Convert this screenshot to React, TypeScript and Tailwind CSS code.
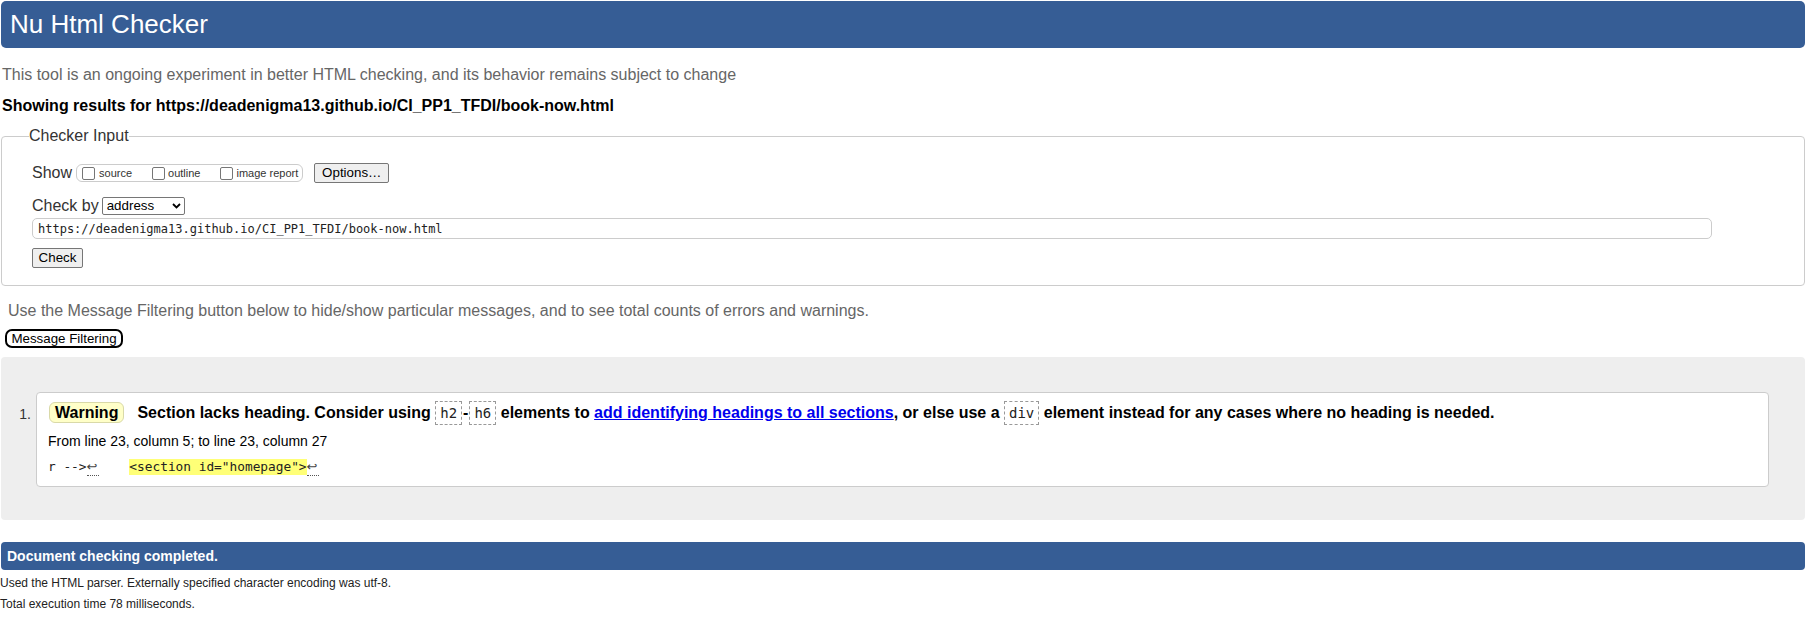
import React from "react";

const Checkbox = () => (
  <span className="inline-block w-[13px] h-[13px] border border-[#767676] rounded-[2px] bg-white shrink-0" />
);

const Code = ({ children }: { children: React.ReactNode }) => (
  <code className="inline-block border border-dashed border-[#999] px-[4px] leading-[22px] font-['DejaVu_Sans_Mono',monospace] text-[14px] font-normal text-[#222] bg-white">
    {children}
  </code>
);

const Ret = () => (
  <span className="inline-block w-[12px] leading-[16px] border-b border-dotted border-[#555] font-['DejaVu_Sans',sans-serif] text-[13px] text-[#444]">
    ↩
  </span>
);

export default function App() {
  return (
    <div className="w-[1806px] h-[620px] overflow-hidden bg-white px-px pt-px font-['Liberation_Sans',Arial,sans-serif] text-black">
      <h1 className="h-[47px] rounded-[5px] bg-[#365d95] text-white text-[26px] leading-[47px] pl-[9px] font-normal">
        Nu Html Checker
      </h1>
      <p className="mt-[17px] pl-px text-[16px] leading-[20px] text-[#666]">
        This tool is an ongoing experiment in better HTML checking, and its behavior remains subject to change
      </p>
      <p className="mt-[11px] pl-px text-[16px] leading-[20px] font-bold">
        Showing results for https://deadenigma13.github.io/CI_PP1_TFDI/book-now.html
      </p>

      <fieldset className="mt-[11px] border border-[#ccc] rounded-[4px] pl-[30px] pt-[18px] pb-[17px] text-[#333]">
        <legend className="-ml-[3px] text-[16px] leading-[18px]">Checker Input</legend>
        <div className="flex items-center h-[20px]">
          <span className="text-[16px] leading-[20px]">Show</span>
          <div className="ml-[4px] flex items-center h-[18px] border border-[#ccc] rounded-[6px] pl-[5px] pr-[4px] text-[11px] text-[#333]">
            <label className="flex items-center">
              <Checkbox />
              <span className="ml-[4px]">source</span>
            </label>
            <label className="flex items-center ml-[20px]">
              <Checkbox />
              <span className="ml-[3px]">outline</span>
            </label>
            <label className="flex items-center ml-[20px]">
              <Checkbox />
              <span className="ml-[3px]">image report</span>
            </label>
          </div>
          <button className="ml-[11px] h-[20px] w-[75px] bg-[#efefef] border border-[#767676] rounded-[2px] text-[13.333px] text-black leading-[18px]">
            Options…
          </button>
        </div>
        <div className="mt-[13px] flex items-center h-[20px]">
          <span className="text-[16px] leading-[20px]">Check by</span>
          <div className="ml-[3px] w-[83px] h-[18px] border border-[#767676] rounded-[2px] flex items-center justify-between pl-[4px] pr-[3px] text-[13.333px] text-black bg-white">
            <span>address</span>
            <svg width="9" height="6" viewBox="0 0 9 6">
              <path d="M1 1 L4.5 4.5 L8 1" fill="none" stroke="#000" strokeWidth="1.8" />
            </svg>
          </div>
        </div>
        <input
          readOnly
          defaultValue="https://deadenigma13.github.io/CI_PP1_TFDI/book-now.html"
          className="block mt-[2px] w-[1680px] h-[21px] border border-[#ccc] rounded-[5px] px-[5px] font-['DejaVu_Sans_Mono',monospace] text-[12px] text-[#222] outline-none"
        />
        <button className="block mt-[9px] h-[20px] w-[51px] bg-[#efefef] border border-[#767676] rounded-[2px] text-[13.333px] text-black leading-[18px]">
          Check
        </button>
      </fieldset>

      <p className="mt-[15px] pl-[7px] text-[16px] leading-[20px] text-[#666]">
        Use the Message Filtering button below to hide/show particular messages, and to see total counts of errors and warnings.
      </p>
      <button className="block mt-[8px] ml-[4px] h-[19px] w-[118px] border-2 border-black rounded-[7px] bg-white text-[13.333px] leading-[15px] text-black">
        Message Filtering
      </button>

      <div className="mt-[9px] rounded-[4px] bg-[#eeeeee] pt-[35px] pb-[33px] pr-[36px] flex items-start">
        <span className="w-[35px] pr-[5px] mt-[12px] text-right text-[14px] leading-[20px] text-[#333]">1.</span>
        <div className="flex-1 border border-[#ccc] rounded-[4px] bg-white pl-[11px] pt-[8px] pb-[10px]">
          <p className="text-[16px] leading-[24px] font-bold">
            <span className="inline-block ml-[1px] border border-[#d9d9a8] rounded-[6px] bg-[#ffffc8] px-[5px] leading-[19px]">
              Warning
            </span>
            <span className="inline-block w-[13px]" />
            Section lacks heading. Consider using <Code>h2</Code>
            <span className="mx-[1px]">-</span>
            <Code>h6</Code> elements to{" "}
            <a href="#" className="text-[#0000ee] underline">
              add identifying headings to all sections
            </a>
            , or else use a <Code>div</Code> element instead for any cases where no heading is needed.
          </p>
          <p className="mt-[6px] text-[14px] leading-[20px]">From line 23, column 5; to line 23, column 27</p>
          <p className="mt-[8px] leading-[16px] font-['DejaVu_Sans_Mono',monospace] text-[12.8px] text-[#222] whitespace-pre">
            r --&gt;
            <Ret />
            {"    "}
            <span className="inline-block bg-[#ffff77] leading-[16px]">&lt;section id="homepage"&gt;</span>
            <Ret />
          </p>
        </div>
      </div>

      <div className="mt-[22px] h-[28px] rounded-[4px] bg-[#365d95] flex items-center pl-[6px] text-white text-[14px] font-bold">
        Document checking completed.
      </div>
      <p className="mt-[3px] -ml-px text-[12px] leading-[21px] text-[#222]">
        Used the HTML parser. Externally specified character encoding was utf-8.
      </p>
      <p className="-ml-px text-[12px] leading-[21px] text-[#222]">Total execution time 78 milliseconds.</p>
      <div className="mt-[5px] -mx-px border-t border-dotted border-[#888]" />
    </div>
  );
}
